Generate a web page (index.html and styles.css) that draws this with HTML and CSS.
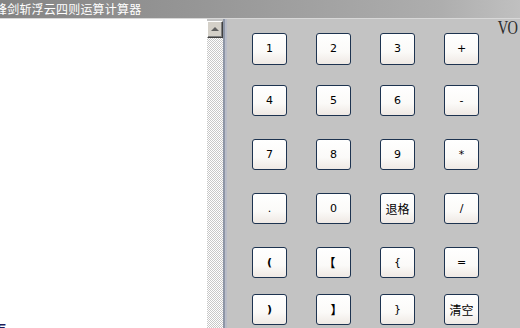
FILE: index.html
```html
<!DOCTYPE html>
<html>
<head>
<meta charset="utf-8">
<link rel="stylesheet" href="styles.css">
</head>
<body>
<div class="window">
  <div class="titlebar"><span class="title">锋剑斩浮云四则运算计算器</span></div>
  <div class="main">
    <div class="editor">
      <div class="textarea"><span class="cut">乍</span></div>
      <div class="scrollbar">
        <div class="sb-btn"><span class="tri"></span></div>
        <div class="sb-track"></div>
      </div>
    </div>
    <div class="divider"></div>
    <div class="keypad">
      <div class="keys">
        <div class="row r1"><button class="key">1</button><button class="key">2</button><button class="key">3</button><button class="key">+</button></div>
        <div class="row r2"><button class="key">4</button><button class="key">5</button><button class="key">6</button><button class="key">-</button></div>
        <div class="row r3"><button class="key">7</button><button class="key">8</button><button class="key">9</button><button class="key">*</button></div>
        <div class="row r4"><button class="key">.</button><button class="key">0</button><button class="key cjk">退格</button><button class="key">/</button></div>
        <div class="row r5"><button class="key bold">(</button><button class="key cjk brk">【</button><button class="key">{</button><button class="key">=</button></div>
        <div class="row r6"><button class="key bold">)</button><button class="key cjk brk2">】</button><button class="key">}</button><button class="key cjk">清空</button></div>
      </div>
      <div class="version">VO</div>
    </div>
  </div>
</div>
</body>
</html>
```
FILE: styles.css
```css
* { box-sizing: border-box; }
html, body { margin: 0; padding: 0; }
body {
  width: 520px;
  height: 328px;
  overflow: hidden;
  background: #c3c3c3;
  font-family: "Liberation Sans", "Noto Sans CJK SC", sans-serif;
}
.window { width: 520px; height: 328px; display: flex; flex-direction: column; }
.titlebar {
  height: 19px;
  flex: none;
  background: linear-gradient(to right, #848484 0%, #979797 40%, #aeaeae 85%, #c0c0c0 100%);
  border-bottom: 1px solid #d8d8d8;
  display: flex;
  align-items: center;
  overflow: hidden;
}
.title {
  margin-left: -5px;
  color: #ffffff;
  font-family: "Noto Sans CJK SC", sans-serif;
  font-size: 12px;
  line-height: 14px;
  letter-spacing: 0.2px;
  white-space: nowrap;
}
.main { flex: 1; display: flex; min-height: 0; }
.editor { width: 223px; display: flex; flex: none; }
.textarea {
  width: 207px;
  background: #ffffff;
  display: flex;
  align-items: flex-end;
  overflow: hidden;
}
.cut {
  margin-left: -6px;
  margin-bottom: -7px;
  color: #1c1c5a;
  font-family: "Noto Sans CJK SC", sans-serif;
  font-size: 12px;
  line-height: 14px;
  font-weight: bold;
}
.scrollbar { width: 16px; display: flex; flex-direction: column; }
.sb-btn {
  height: 17px;
  margin-top: 2px;
  background: #d4d0c8;
  border-top: 1px solid #ffffff;
  border-left: 1px solid #ffffff;
  border-right: 1px solid #404040;
  border-bottom: 1px solid #404040;
  box-shadow: inset -1px -1px 0 #808080;
  display: flex;
  align-items: center;
  justify-content: center;
}
.tri {
  width: 0; height: 0;
  border-left: 4px solid transparent;
  border-right: 4px solid transparent;
  border-bottom: 4px solid #606060;
  margin-top: -1px;
}
.sb-track {
  flex: 1;
  background: repeating-conic-gradient(#c8c8c8 0 25%, #ffffff 0 50%) 0 0 / 2px 2px;
}
.divider {
  width: 4px;
  flex: none;
  background: linear-gradient(to right, #8e96a6 0 2px, #b8bcc8 2px 4px);
}
.keypad { flex: 1; display: flex; }
.keys {
  padding-left: 25px;
  padding-top: 14px;
  display: flex;
  flex-direction: column;
}
.row { display: flex; gap: 29px; height: 31px; }
.r1 { height: 32px; }
.r2 { margin-top: 20px; }
.r3 { margin-top: 23px; }
.r4 { margin-top: 23px; }
.r5 { margin-top: 23px; }
.r6 { margin-top: 16px; }
.key {
  width: 35px;
  height: 100%;
  padding: 0;
  margin: 0;
  border: 1px solid #1d3350;
  border-radius: 3px;
  background: linear-gradient(to bottom, #ffffff 0%, #fbfaf8 60%, #efe9e4 100%);
  color: #000000;
  font-family: "DejaVu Sans", sans-serif;
  font-size: 11px;
  line-height: 12px;
  display: flex;
  align-items: center;
  justify-content: center;
}
.key.cjk { font-family: "Noto Sans CJK SC", sans-serif; font-size: 12px; }
.key.bold { font-weight: bold; }
.key.brk { font-weight: bold; padding-right: 8px; }
.key.brk2 { font-weight: bold; padding-left: 6px; }
.version {
  margin-left: auto;
  margin-right: 3px;
  margin-top: 0px;
  font-family: "Liberation Serif", serif;
  font-size: 18px;
  line-height: 18px;
  font-weight: normal;
  color: #2a2a2a;
  letter-spacing: -1px;
  transform: scaleX(0.8);
  transform-origin: right top;
}
```
